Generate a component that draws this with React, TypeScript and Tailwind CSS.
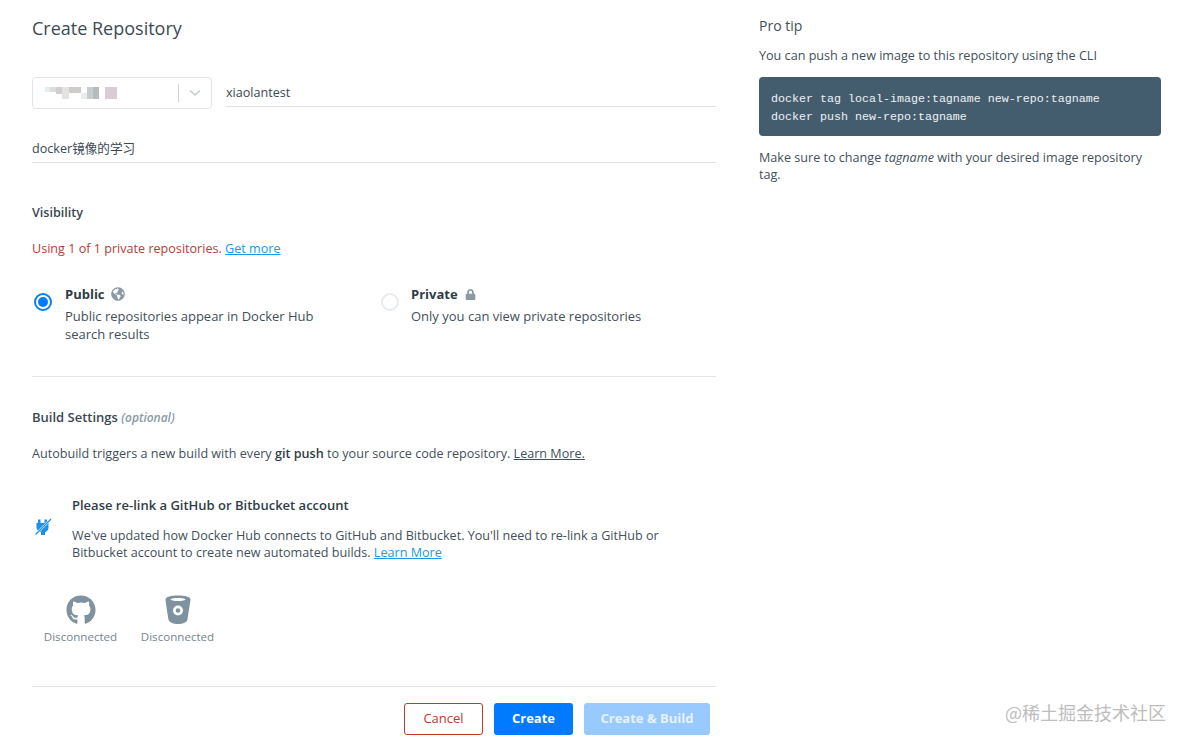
import React from 'react';
import { FaGithub, FaGlobeAmericas, FaLock } from 'react-icons/fa';

const sans = { fontFamily: '"Open Sans", "Noto Sans CJK SC", sans-serif' };

const BlurredName = () => (
  <div className="flex items-start h-[14px]">
    <div className="w-[5px] h-[5px] mt-[1px] bg-[#e3edf3]" />
    <div className="w-[6px] h-[5px] mt-[1px] bg-[#dcdcdc]" />
    <div className="w-[6px] h-[7px] mt-[1px] bg-[#cfcfcf]" />
    <div className="w-[7px] h-[12px] mt-[1px] bg-[#e6e2e2]" />
    <div className="w-[12px] h-[6px] mt-[1px] bg-[#cdccca]" />
    <div className="w-[6px] h-[6px] mt-[7px] bg-[#ececec]" />
    <div className="w-[6px] h-[12px] mt-[1px] bg-[#c9cccc]" />
    <div className="w-[6px] h-[12px] mt-[1px] bg-[#b6bcbc]" />
    <div className="w-[6px]" />
    <div className="w-[12px] h-[12px] mt-[1px] bg-[#d8ccd6]" />
  </div>
);

const BitbucketIcon = () => (
  <svg width="26" height="30" viewBox="0 0 26 30">
    <path fillRule="evenodd" fill="#7f929f" d="M13 .5C6 .5.5 2 .5 4.4c0 .8 2.300 15.600 3 20 .5 2.800 5 4.600 9.500 4.600s9-1.800 9.500-4.600c.7-4.400 3-19.200 3-20C25.500 2 20 .5 13 .5zM13 3c4 0 7.500.6 7.500 1.500S17 6 13 6 5.500 5.400 5.500 4.500 9 3 13 3zM13 10.500a5 5 0 1 1 0 10 5 5 0 0 1 0-10zM13 13.200a2.300 2.300 0 1 0 0 4.600 2.300 2.300 0 0 0 0-4.600z" />
  </svg>
);

// plug with a double slash through it
const RelinkIcon = () => (
  <svg width="18" height="18" viewBox="0 0 18 18">
    <path fill="#1d8fe8" d="M4 1.500h2.500V5h4V1.500H13V5h1.500v4.500c0 2.500-1.500 4-3.500 4.500v3H7v-3c-2.200-.5-4.500-2-4.500-4.500V5H4z" />
    <path d="M1.500 16.500 16.500 1.500" stroke="#fff" strokeWidth="2.400" />
    <path d="M1.500 16.500 17 1" stroke="#1d8fe8" strokeWidth="1.300" />
  </svg>
);

export default function App() {
  return (
    <div className="relative w-[1187px] h-[744px] overflow-hidden bg-white text-[12.6px] text-[#3f4f5c]" style={sans}>
      <div className="flex pl-8 pr-[26px]">
        {/* Left form */}
        <div className="w-[684px]">
          <h1 className="pt-[16px] text-[18px] leading-[24px] text-[#3c4a56]">Create Repository</h1>

          <div className="flex mt-[37px] gap-[14px]">
            <div className="flex items-center w-[180px] h-[32px] border border-[#e2e5e8] rounded pl-[12px]">
              <div className="flex-1"><BlurredName /></div>
              <div className="w-px h-[18px] bg-[#cdd3d7]" />
              <svg width="12" height="8" viewBox="0 0 12 8" className="mx-[10px]" fill="none" stroke="#c3cad0" strokeWidth="1.600">
                <path d="M1 1.500l5 4.500 5-4.500" />
              </svg>
            </div>
            <div className="flex-1 h-[30px] pt-[1px] border-b border-[#dfe3e6] leading-[30px] text-[#3a4853]">xiaolantest</div>
          </div>

          <div className="mt-[24px] h-[30px] pt-[1px] border-b border-[#dfe3e6] leading-[30px] text-[#3a4853]">docker镜像的学习</div>

          <h2 className="mt-[41px] font-semibold leading-[18px] text-[#3a4853]">Visibility</h2>
          <p className="mt-[18px] leading-[18px] text-[#b5403a]">
            Using 1 of 1 private repositories. <a className="text-[#1f97e6] underline">Get more</a>
          </p>

          <div className="flex mt-[28px] text-[13px]">
            <div className="flex w-[347px]">
              <div className="w-[33px] pt-[7px] pl-[2px]">
                <div className="flex items-center justify-center w-[18px] h-[18px] rounded-full border-2 border-[#0b7fe8] bg-white">
                  <div className="w-[10px] h-[10px] rounded-full bg-[#007bff]" />
                </div>
              </div>
              <div className="w-[270px]">
                <div className="flex items-center gap-[6px] h-[18px] font-bold text-[#2f3c47]">
                  Public <FaGlobeAmericas className="text-[#8a9aa5] text-[14px] mb-[2px]" />
                </div>
                <p className="mt-[3px] leading-[18px]">Public repositories appear in Docker Hub search results</p>
              </div>
            </div>
            <div className="flex">
              <div className="w-[32px] pt-[7px] pl-[2px]">
                <div className="w-[18px] h-[18px] rounded-full border-2 border-[#e8ebed]" />
              </div>
              <div>
                <div className="flex items-center gap-[7px] h-[18px] font-bold text-[#2f3c47]">
                  Private <FaLock className="text-[#8a9aa5] text-[11px] mb-[2px]" />
                </div>
                <p className="mt-[3px] leading-[18px]">Only you can view private repositories</p>
              </div>
            </div>
          </div>

          <div className="mt-[33px] border-t border-[#e2e5e8]" />

          <h2 className="mt-[31px] text-[13px] font-semibold leading-[18px] text-[#3a4853]">
            Build Settings <em className="font-semibold text-[12px] text-[#8a9aa5]">(optional)</em>
          </h2>
          <p className="mt-[18px] leading-[18px]">
            Autobuild triggers a new build with every <b className="font-semibold text-[#2f3c47]">git push</b> to your source code repository. <a className="underline">Learn More.</a>
          </p>

          <div className="flex items-center mt-[33px]">
            <div className="w-[40px] pb-[3px] pl-[2px]"><RelinkIcon /></div>
            <div className="w-[620px]">
              <h3 className="text-[13px] font-semibold leading-[18px] text-[#2f3c47]">Please re-link a GitHub or Bitbucket account</h3>
              <p className="mt-[13px] leading-[17px]">
                We've updated how Docker Hub connects to GitHub and Bitbucket. You'll need to re-link a GitHub or Bitbucket account to create new automated builds. <a className="text-[#1f97e6] underline">Learn More</a>
              </p>
            </div>
          </div>

          <div className="flex mt-[34px] pl-[11px] gap-[22px] text-[11.6px] text-[#76858f]">
            <div className="flex flex-col items-center w-[75px]">
              <FaGithub className="text-[30px] text-[#7f929f]" />
              <span className="mt-[4px] leading-[16px]">Disconnected</span>
            </div>
            <div className="flex flex-col items-center w-[75px]">
              <BitbucketIcon />
              <span className="mt-[4px] leading-[16px]">Disconnected</span>
            </div>
          </div>

          <div className="mt-[41px] border-t border-[#e2e5e8]" />

          <div className="flex justify-end gap-[11px] mt-[16px] pr-[6px] text-[13px]">
            <button className="w-[79px] h-[32px] rounded-[3px] border border-[#c0392b] font-medium text-[#c0392b]">Cancel</button>
            <button className="w-[79px] h-[32px] rounded-[3px] bg-[#007bff] font-bold text-white">Create</button>
            <button className="w-[126px] h-[32px] rounded-[3px] bg-[#99caff] font-bold text-[#e6f2ff]">Create &amp; Build</button>
          </div>
        </div>

        {/* Pro tip */}
        <div className="w-[402px] ml-[43px]">
          <h2 className="pt-[17px] text-[14px] leading-[18px]">Pro tip</h2>
          <p className="mt-[12px] leading-[18px]">You can push a new image to this repository using the CLI</p>
          <pre className="mt-[12px] h-[59px] rounded bg-[#445d6e] px-[12px] pt-[13px] text-[11.67px] leading-[18px] text-[#eef2f5]" style={{ fontFamily: '"Liberation Mono", monospace' }}>
            {'docker tag local-image:tagname new-repo:tagname\ndocker push new-repo:tagname'}
          </pre>
          <p className="mt-[13px] leading-[17px]">
            Make sure to change <em>tagname</em> with your desired image repository tag.
          </p>
        </div>
      </div>

      {/* Watermark */}
      <div className="absolute left-[1005px] top-[700px] text-[18px] leading-[24px] text-[#bdbdbd]" style={{ fontFamily: '"Noto Sans CJK SC", sans-serif' }}>
        @稀土掘金技术社区
      </div>
    </div>
  );
}
